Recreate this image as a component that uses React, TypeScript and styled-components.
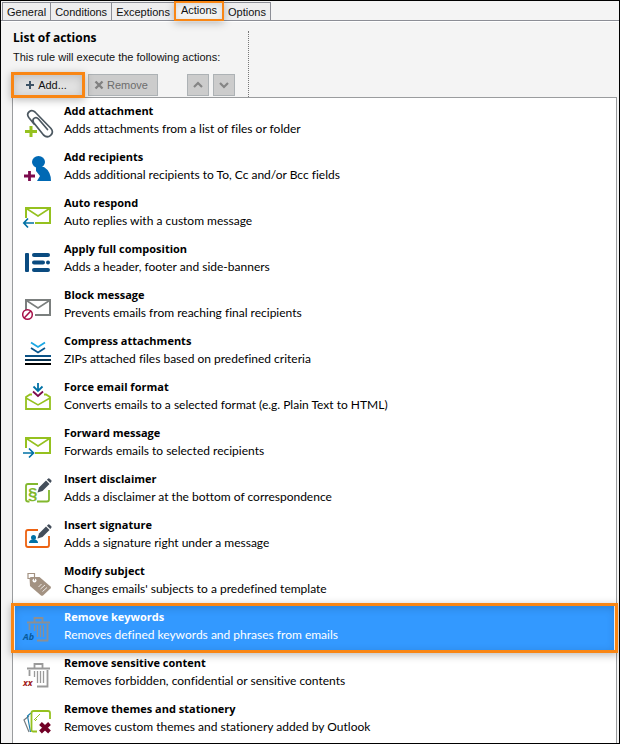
import React, { useState } from "react";
import styled, { createGlobalStyle, css } from "styled-components";

const GlobalStyle = createGlobalStyle`
  * { box-sizing: border-box; }
  html, body, #root { height: 100%; }
  body { margin: 0; overflow: hidden; }
`;

const highlight = css<{ $inset: string }>`
  &::after {
    content: "";
    position: absolute;
    z-index: 1;
    inset: ${(p) => p.$inset};
    border: 3px solid #f98614;
    box-shadow: 0 2px 8px rgba(0, 0, 0, 0.28), inset 0 2px 8px rgba(0, 0, 0, 0.16);
    pointer-events: none;
  }
`;

const Window = styled.main`
  display: flex;
  flex-direction: column;
  height: 100%;
  border: 1px solid #000;
  background: #f4f4f4;
  color: #111;
  font: 11px/16px "Liberation Sans", Arial, sans-serif;
`;

const TabBar = styled.nav`
  display: flex;
  align-items: flex-end;
  flex: none;
  height: 20px;
  padding-left: 1px;
  border-bottom: 1px solid #8c8e96;
`;

const Tab = styled.button<{ $active: boolean }>`
  position: relative;
  height: ${(p) => (p.$active ? 19 : 18)}px;
  margin-right: -1px;
  padding: ${(p) => (p.$active ? "0 6px 2px" : "0 4px")};
  border: 1px solid #8c8e96;
  border-bottom: 0;
  background: ${(p) => (p.$active ? "#f4f4f4" : "#eeeeef")};
  color: #111;
  font: inherit;
  line-height: 16px;
  white-space: nowrap;
  ${(p) => p.$active && css`
    z-index: 1;
    &::after {
      content: "";
      position: absolute;
      inset: -1px;
      border: 2px solid #f98614;
      box-shadow: 0 2px 8px rgba(0, 0, 0, 0.25), inset 0 2px 6px rgba(0, 0, 0, 0.12);
    }
  `}
`;

const Panel = styled.section`
  display: flex;
  flex: 1;
  min-height: 0;
  flex-direction: column;
  padding: 0 2px 0 11px;
  border-top: 1px solid #fff;
`;

const Header = styled.header`
  width: 237px;
  height: 66px;
  margin-top: 9px;
  border-right: 1px dotted #777;
`;

const Heading = styled.h1`
  margin: 0;
  padding-left: 1px;
  color: #000;
  font: bold 12px/14px "Open Sans", sans-serif;
`;

const Intro = styled.p`
  margin: 5px 0 10px;
  padding-left: 1px;
  line-height: 14px;
`;

const Toolbar = styled.div`
  display: flex;
  gap: 5px;
  padding-left: 1px;
`;

const ToolButton = styled.button<{ $primary?: boolean; $narrow?: boolean; $inset?: string }>`
  position: relative;
  display: flex;
  align-items: center;
  justify-content: center;
  gap: 3px;
  width: ${(p) => (p.$narrow ? 22 : 70)}px;
  height: 22px;
  padding: 0 4px 0 0;
  border: 1px solid ${(p) => (p.$primary ? "#3c7fb1" : "#adb2b5")};
  background: ${(p) => (p.$primary ? "#e1e1e1" : "#cccccc")};
  color: ${(p) => (p.$primary ? "#111" : "#6d6d6d")};
  font: inherit;
  ${(p) => p.$narrow && css`padding: 0;`}
  ${(p) => p.$primary && highlight}
`;

const MoveGroup = styled.div`
  display: flex;
  gap: 4px;
  margin-left: 24px;
`;

const List = styled.ul`
  flex: 1;
  min-height: 0;
  margin: 0;
  padding: 0 2px;
  border: 1px solid #9a9c9e;
  border-bottom: 0;
  background: #fff;
  list-style: none;
`;

const Row = styled.li<{ $selected: boolean; $inset: string }>`
  position: relative;
  height: 46px;
  background: ${(p) => (p.$selected ? "#3399ff" : "transparent")};
  color: ${(p) => (p.$selected ? "#fff" : "#000")};
  ${(p) => p.$selected && highlight}
`;

const RowButton = styled.button`
  display: flex;
  align-items: flex-start;
  gap: 6px;
  width: 100%;
  height: 46px;
  padding: 0 0 0 7px;
  border: 0;
  background: none;
  color: inherit;
  font: 12px/18px Lato, "Open Sans", sans-serif;
  font-variant-ligatures: none;
  text-align: left;
`;

const RowText = styled.span`
  display: flex;
  flex-direction: column;
  padding-top: 4px;
  white-space: nowrap;
`;

const RowTitle = styled.strong`
  font: bold 11px/18px "Open Sans", sans-serif;
`;

const Icon = styled.svg`
  flex: none;
  width: 36px;
  height: 46px;
  fill: none;
`;

const SmallIcon = styled.svg`
  flex: none;
  width: 10px;
  height: 10px;
  fill: none;
`;

const GREEN = "#95c11f";

const Envelope = ({ color = GREEN }: { color?: string }) => (
  <>
    <path d="M16 28V18H40V33H25" stroke={color} strokeWidth="2" />
    <path d="M16.500 18.500L28 26L39.500 18.500" stroke={color} strokeWidth="1.500" />
  </>
);

const Pen = () => (
  <>
    <path d="M27.500 26.500L29 21.500L36 14.500L39.500 18L32.500 25Z" fill="#444e5b" />
    <path d="M36.900 13.700L38.200 12.500Q39 12 39.700 12.700L41.300 14.300Q42 15 41.300 15.800L40.300 17Z" fill="#444e5b" />
  </>
);

const Trash = ({ color }: { color: string }) => (
  <g stroke={color}>
    <path d="M17 18.500H40M24.500 17.500V14H32.500V17.500" strokeWidth="1.800" />
    <path d="M19.500 20V26M37.500 20V36.500H27" strokeWidth="1.800" />
    <path d="M24.500 21V27M27.500 21V33M30.500 21V33M33.500 21V33" strokeWidth="1.300" />
  </g>
);

const icons: Record<string, React.ReactNode> = {
  attachment: (
    <>
      <path d="M24 26L18.800 19.500C15.500 15 21 10.500 25 14L41 30.500C45 35.500 38.500 41.500 33.500 37L23.500 24.500C21.500 20.500 26 18 28.500 21L37.500 31.500" stroke="#4b5760" strokeWidth="1.700" strokeLinecap="round" />
      <path d="M21 28V39M15 33.500H27" stroke={GREEN} strokeWidth="3" />
    </>
  ),
  recipients: (
    <>
      <ellipse cx="28.500" cy="18" rx="6.500" ry="6" fill="#0069b4" />
      <path d="M26 23H34Q41 27.500 41 37H27L30 32L26 27Z" fill="#0069b4" />
      <path d="M19.500 27V37M14 32H25" stroke="#7c0a4d" strokeWidth="2.800" />
    </>
  ),
  respond: (
    <>
      <Envelope />
      <path d="M24 33H14M18 28.500L13.800 33L18 37.500" stroke="#0071a5" strokeWidth="1.700" />
    </>
  ),
  composition: (
    <>
      <rect x="15" y="17" width="4" height="19" rx="1" fill="#0a4b80" />
      <rect x="22" y="17" width="18" height="4" rx="2" fill="#0a4b80" />
      <rect x="22" y="24.500" width="13" height="4" rx="2" fill="#0a4b80" />
      <circle cx="38" cy="26.500" r="2" fill="#0a4b80" />
      <rect x="22" y="32" width="18" height="4" rx="2" fill="#0a4b80" />
    </>
  ),
  block: (
    <>
      <Envelope color="#7b7f7e" />
      <circle cx="17.500" cy="32.500" r="4.800" fill="#fff" stroke="#a50e46" strokeWidth="1.500" />
      <path d="M14.200 36L20.800 29" stroke="#a50e46" strokeWidth="1.500" />
    </>
  ),
  compress: (
    <>
      <path d="M21 14.500L28 19L35 14.500" stroke="#1aa7e4" strokeWidth="1.800" />
      <path d="M21 20L28 24.500L35 20" stroke="#09568d" strokeWidth="1.800" />
      <path d="M15 28H41" stroke="#0a5286" strokeWidth="2" />
      <path d="M15 32H41" stroke="#07304d" strokeWidth="2" />
      <path d="M15 36H41" stroke="#000" strokeWidth="2" />
    </>
  ),
  format: (
    <>
      <path d="M22 20.500H20L16 23V35H40V23L36 20.500H34" stroke={GREEN} strokeWidth="1.800" />
      <path d="M16 24L28 31L40 24" stroke={GREEN} strokeWidth="1.500" />
      <path d="M28 9V17M23.500 12.500L28 17L32.500 12.500" stroke="#0071a5" strokeWidth="1.800" />
      <path d="M23 17.500L28 22L33 17.500" stroke="#7c0a4d" strokeWidth="1.800" />
    </>
  ),
  forward: (
    <>
      <Envelope />
      <path d="M13 33H23M19 28.500L23.500 33L19 37.500" stroke="#0071a5" strokeWidth="1.700" />
    </>
  ),
  disclaimer: (
    <>
      <path d="M28 18H18Q16 18 16 20V33.500Q16 35.500 18 35.500H19.500M27 35.500H37Q39 35.500 39 33.500V24" stroke="#82b82e" strokeWidth="1.800" />
      <text x="18" y="34" fill="#82b82e" fontFamily="Liberation Sans" fontWeight="700" fontSize="17">§</text>
      <Pen />
    </>
  ),
  signature: (
    <>
      <path d="M28 18H18Q16 18 16 20V33Q16 35 18 35H37Q39 35 39 33V24" stroke="#ed6211" strokeWidth="1.800" />
      <circle cx="23.500" cy="25.500" r="2.500" fill="#0071a5" />
      <path d="M19 31Q19 28 22 27.500H25Q28 28 28 31Z" fill="#0071a5" />
      <Pen />
    </>
  ),
  subject: (
    <>
      <path d="M19.500 20.500Q19.500 19 21 19H29.500L40.500 28.500Q41.500 29.500 40.500 30.500L33 37.500Q32 38.200 31 37.500L20 28Z" fill="#a39282" />
      <circle cx="24.500" cy="22.500" r="2" fill="#fff" />
      <path d="M24.500 22.500V15.500H18V20.500H20" stroke="#a39282" strokeWidth="1.200" />
      <path d="M28.500 29L31.500 26M30.500 31L35 27M32.500 33.500L37 29.500" stroke="#fff" strokeWidth="0.800" />
    </>
  ),
  keywords: (
    <>
      <Trash color="#8d8f92" />
      <text x="13" y="36" fill="#075a9c" fontFamily="Open Sans" fontStyle="italic" fontWeight="700" fontSize="9">Ab</text>
    </>
  ),
  sensitive: (
    <>
      <Trash color="#9a9a9a" />
      <text x="13" y="36" fill="#9f1b21" fontFamily="Open Sans" fontStyle="italic" fontWeight="700" fontSize="9">xx</text>
    </>
  ),
  themes: (
    <>
      <path d="M19 20L14 24L19 36" stroke="#747c80" strokeWidth="1.200" />
      <path d="M21 17L17.500 20L20.500 36" stroke="#2380ae" strokeWidth="1.200" />
      <path d="M27 35.500H23Q21.500 35.500 21.500 34V17Q21.500 15 23.500 15H38Q40 15 40 17V23" stroke={GREEN} strokeWidth="1.800" />
      <path d="M24 24L30 18M25 25L27 23" stroke={GREEN} />
      <path d="M30.500 27.500L39.500 36M39.500 27.500L30.500 36" stroke="#710026" strokeWidth="4" />
    </>
  ),
};

const actions = [
  ["attachment", "Add attachment", "Adds attachments from a list of files or folder"],
  ["recipients", "Add recipients", "Adds additional recipients to To, Cc and/or Bcc fields"],
  ["respond", "Auto respond", "Auto replies with a custom message"],
  ["composition", "Apply full composition", "Adds a header, footer and side-banners"],
  ["block", "Block message", "Prevents emails from reaching final recipients"],
  ["compress", "Compress attachments", "ZIPs attached files based on predefined criteria"],
  ["format", "Force email format", "Converts emails to a selected format (e.g. Plain Text to HTML)"],
  ["forward", "Forward message", "Forwards emails to selected recipients"],
  ["disclaimer", "Insert disclaimer", "Adds a disclaimer at the bottom of correspondence"],
  ["signature", "Insert signature", "Adds a signature right under a message"],
  ["subject", "Modify subject", "Changes emails' subjects to a predefined template"],
  ["keywords", "Remove keywords", "Removes defined keywords and phrases from emails"],
  ["sensitive", "Remove sensitive content", "Removes forbidden, confidential or sensitive contents"],
  ["themes", "Remove themes and stationery", "Removes custom themes and stationery added by Outlook"],
];

const tabs = ["General", "Conditions", "Exceptions", "Actions", "Options"];

export default function App() {
  const [tab, setTab] = useState("Actions");
  const [selected, setSelected] = useState("keywords");
  return (
    <Window>
      <GlobalStyle />
      <TabBar role="tablist">
        {tabs.map((name) => (
          <Tab key={name} role="tab" aria-selected={name === tab} $active={name === tab} onClick={() => setTab(name)}>
            {name}
          </Tab>
        ))}
      </TabBar>
      <Panel>
        <Header>
          <Heading>List of actions</Heading>
          <Intro>This rule will execute the following actions:</Intro>
          <Toolbar>
            <ToolButton $primary $inset="-3px">
              <SmallIcon viewBox="0 0 10 10"><path d="M5 1V9M1 5H9" stroke="#3d5366" strokeWidth="2" /></SmallIcon>
              Add...
            </ToolButton>
            <ToolButton disabled>
              <SmallIcon viewBox="0 0 10 10"><path d="M1.500 1.500L8.500 8.500M8.500 1.500L1.500 8.500" stroke="#808080" strokeWidth="2.400" /></SmallIcon>
              Remove
            </ToolButton>
            <MoveGroup>
              <ToolButton $narrow disabled aria-label="Move up">
                <SmallIcon viewBox="0 0 10 10"><path d="M1 7L5 3L9 7" stroke="#858585" strokeWidth="2.200" /></SmallIcon>
              </ToolButton>
              <ToolButton $narrow disabled aria-label="Move down">
                <SmallIcon viewBox="0 0 10 10"><path d="M1 3L5 7L9 3" stroke="#858585" strokeWidth="2.200" /></SmallIcon>
              </ToolButton>
            </MoveGroup>
          </Toolbar>
        </Header>
        <List>
          {actions.map(([id, title, description]) => (
            <Row key={id} $selected={id === selected} $inset="-1px -4px -3px">
              <RowButton aria-pressed={id === selected} onClick={() => setSelected(id)}>
                <Icon viewBox="12 0 36 46" aria-hidden="true">{icons[id]}</Icon>
                <RowText>
                  <RowTitle>{title}</RowTitle>
                  <span>{description}</span>
                </RowText>
              </RowButton>
            </Row>
          ))}
        </List>
      </Panel>
    </Window>
  );
}
